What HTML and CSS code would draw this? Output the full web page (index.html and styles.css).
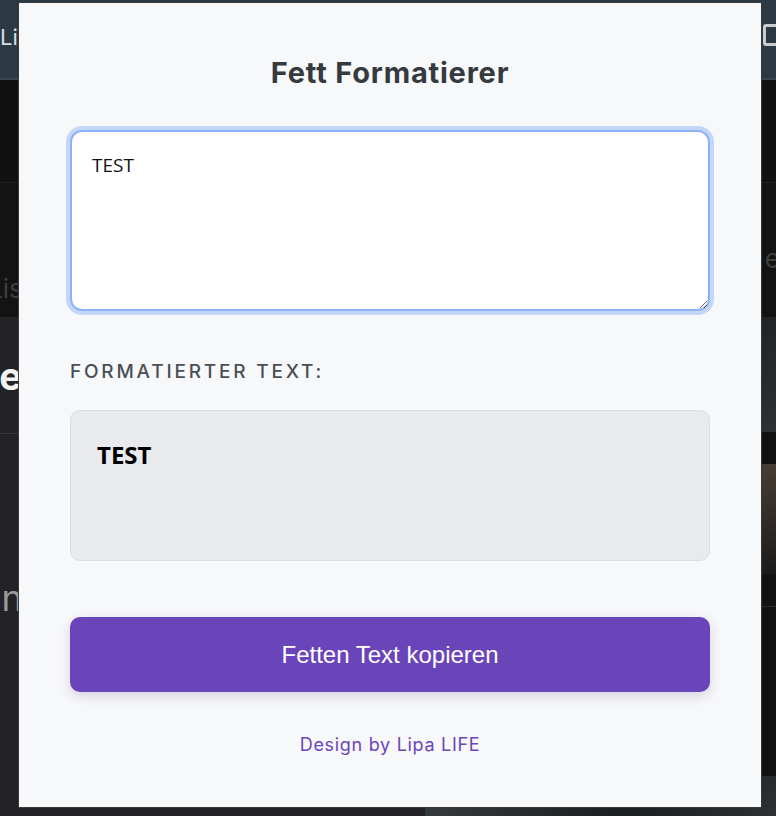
FILE: index.html
```html
<!DOCTYPE html>
<html lang="de">
<head>
<meta charset="utf-8">
<title>Fett Formatierer</title>
<link rel="stylesheet" href="styles.css">
</head>
<body>
<div class="page">
  <header class="site-header">
    <span class="site-nav">Listen</span>
    <span class="site-icon"></span>
  </header>
  <div class="band band-one"></div>
  <div class="band band-two">
    <span class="ghost ghost-left">Listen</span>
    <span class="ghost ghost-right">e</span>
  </div>
  <div class="columns">
    <div class="col-left">
      <div class="col-heading">Neue</div>
      <div class="col-sub">Dann</div>
    </div>
    <div class="col-right">
      <div class="photo photo-a"></div>
      <div class="photo photo-b"></div>
      <div class="col-right-text">Inh</div>
      <div class="photo photo-c"></div>
    </div>
  </div>
</div>

<main class="popup">
  <h1 class="popup-title">Fett Formatierer</h1>
  <textarea class="input-box" id="input">TEST</textarea>
  <div class="output-label">Formatierter Text:</div>
  <div class="output-box">TEST</div>
  <button class="copy-btn">Fetten Text kopieren</button>
  <div class="footer">Design by Lipa LIFE</div>
</main>
<script src="script.js"></script>
</body>
</html>
```

FILE: styles.css
```css
* { box-sizing: border-box; }

html, body {
  margin: 0;
  padding: 0;
  width: 776px;
  height: 816px;
  overflow: hidden;
  background: #111111;
  font-family: "Inter", "Liberation Sans", sans-serif;
}

/* ---- background page ---- */
.page {
  width: 776px;
  height: 816px;
  display: flex;
  flex-direction: column;
}

.site-header {
  height: 80px;
  background: #2b3a42;
  border-bottom: 2px solid #3a464d;
  display: flex;
  align-items: center;
  justify-content: space-between;
  padding-bottom: 4px;
}

.site-nav {
  color: #d9dde0;
  font-size: 22px;
  margin-left: 0;
}

.site-icon {
  width: 22px;
  height: 22px;
  border: 3px solid #c9cdd0;
  border-radius: 3px;
  margin-right: -9px;
  margin-bottom: 4px;
}

.band-one {
  height: 103px;
  background: #101110;
  border-bottom: 1px solid #1e1f1e;
}

.band-two {
  height: 134px;
  background: #121312;
  position: relative;
}

.ghost {
  position: absolute;
  color: #3e3f40;
  font-size: 26px;
}
.ghost-left { left: -12px; top: 90px; }
.ghost-right { right: -4px; top: 60px; }

.columns {
  flex: 1;
  display: grid;
  grid-template-columns: 425px 1fr;
}

.col-left {
  background: #232325;
  display: flex;
  flex-direction: column;
}

.col-heading {
  color: #f2f2f2;
  font-weight: 700;
  font-size: 38px;
  height: 117px;
  padding-top: 36px;
  margin-left: -76px;
  border-bottom: 1px solid #363638;
}

.col-sub {
  color: #9a9a9c;
  font-size: 36px;
  margin-top: 142px;
  margin-left: -66px;
}

.col-right {
  background: #121212;
  display: flex;
  flex-direction: column;
}

.photo {
  background: linear-gradient(135deg, #3a3f42, #1b1d1f 60%, #2e3133);
}
.photo-a { height: 115px; }
.photo-b { height: 110px; margin-top: 32px; background: linear-gradient(160deg, #2c2a28, #4a3f36 50%, #1a1a1a); }
.col-right-text { color: #6a6a6a; font-size: 34px; padding-top: 64px; height: 170px; border-top: 1px solid #2a2a2a; margin-top: 32px; }
.photo-c { height: 40px; }

/* ---- popup ---- */
.popup {
  position: absolute;
  left: 18px;
  top: 2px;
  width: 744px;
  height: 806px;
  background: #f7f8fa;
  border: 1px solid #3a3a3a;
  padding: 53px 51px 0;
  display: flex;
  flex-direction: column;
}

.popup-title {
  margin: 0;
  text-align: center;
  font-family: "Inter", "Liberation Sans", sans-serif;
  font-weight: 700;
  font-size: 29px;
  line-height: 34px;
  letter-spacing: 0.8px;
  color: #343a40;
}

.input-box {
  margin-top: 40px;
  width: 640px;
  height: 181px;
  border: 2px solid #8db2f6;
  border-radius: 12px;
  box-shadow: 0 0 0 4px #c5d7f9;
  background: #ffffff;
  padding: 20px 20px;
  font-family: "Open Sans", "Liberation Sans", sans-serif;
  font-size: 19px;
  line-height: 26px;
  color: #111111;
  caret-color: #000000;
  outline: none;
  resize: vertical;
}

.output-label {
  margin-top: 50px;
  font-size: 19px;
  line-height: 22px;
  font-weight: 500;
  letter-spacing: 2.8px;
  text-transform: uppercase;
  color: #4a4f55;
}

.output-box {
  margin-top: 27px;
  height: 151px;
  background: #e9eaed;
  border: 1px solid #dbdde0;
  border-radius: 10px;
  padding: 28px 26px;
  font-family: "Open Sans", "Liberation Sans", sans-serif;
  font-weight: 700;
  font-size: 24px;
  line-height: 32px;
  color: #000000;
}

.copy-btn {
  margin-top: 56px;
  height: 75px;
  width: 640px;
  border: none;
  border-radius: 10px;
  background: #6a45b9;
  color: #ffffff;
  font-family: "Liberation Sans", Arial, sans-serif;
  font-size: 24px;
  box-shadow: 0 4px 12px rgba(60, 40, 110, 0.18);
  cursor: pointer;
}

.footer {
  margin-top: 42px;
  text-align: center;
  font-size: 18px;
  line-height: 22px;
  letter-spacing: 0.7px;
  color: #6a45b9;
}
```

FILE: script.js
```js
var input = document.getElementById('input');
input.focus();
input.setSelectionRange(input.value.length, input.value.length);
```
